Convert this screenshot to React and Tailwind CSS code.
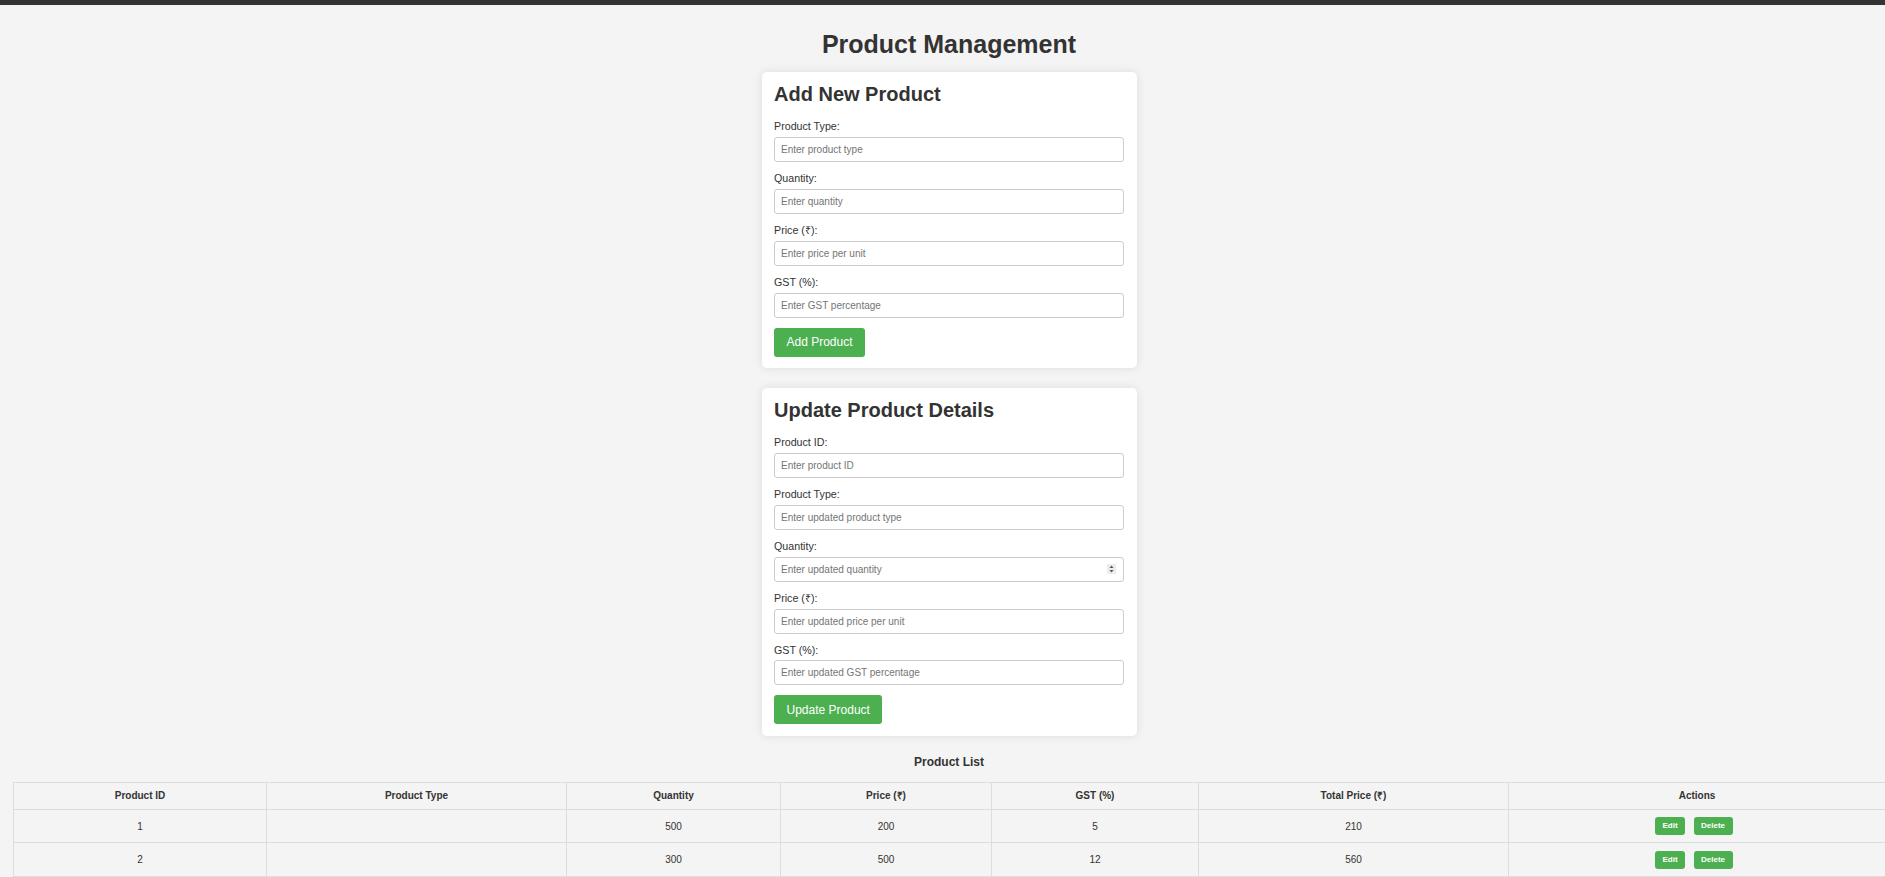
import { useState } from 'react';

const Field = ({ label, placeholder, spinner }) => (
  <div className="mb-[10px]">
    <label className="block text-[10.7px] leading-[12.3px] mb-[4.5px]">{label}</label>
    <div className="relative">
      <input
        type="text"
        placeholder={placeholder}
        className="block w-full h-[25px] px-[6px] text-[10px] bg-white border border-[#ccc] rounded-[3px] outline-none placeholder:text-[#757575]"
      />
      {spinner && (
        <span className="absolute right-[8px] top-1/2 -translate-y-1/2 w-[9px] h-[10px] bg-[#ececec] flex items-center justify-center">
          <svg width="5" height="8" viewBox="0 0 5 8">
            <path d="M2.5 0.5 L4.5 3 L0.5 3 Z" fill="#555" />
            <path d="M2.5 7.5 L4.5 5 L0.5 5 Z" fill="#555" />
          </svg>
        </span>
      )}
    </div>
  </div>
);

const Card = ({ title, fields, button, className = '' }) => (
  <div className={`w-[375px] mx-auto bg-white rounded-[5px] shadow-[0_0_10px_rgba(0,0,0,0.1)] px-[12.5px] pt-[10.5px] pb-[11.5px] ${className}`}>
    <h2 className="text-[20px] font-bold leading-[22.3px] mb-[15.5px]">{title}</h2>
    {fields.map((f) => (
      <Field key={f.label + f.placeholder} {...f} />
    ))}
    <button className="h-[29px] px-[12.5px] text-[12px] text-white bg-[#4CAF50] rounded-[3px]">
      {button}
    </button>
  </div>
);

const products = [
  { id: 1, type: '', qty: 500, price: 200, gst: 5, total: 210 },
  { id: 2, type: '', qty: 300, price: 500, gst: 12, total: 560 },
];

const App = () => {
  const [rows] = useState(products);

  return (
    <div className="min-h-screen bg-[#f4f4f4] text-[#333] font-['Liberation_Sans',Arial,sans-serif] overflow-x-hidden">
      <div className="h-[5px] bg-[#333]" />
      <div className="pl-[13px] pb-[3px]">
        <h1 className="text-center text-[25px] font-bold leading-[28.75px] pt-[25.3px] mb-[13px]">
          Product Management
        </h1>

        <Card
          title="Add New Product"
          button="Add Product"
          fields={[
            { label: 'Product Type:', placeholder: 'Enter product type' },
            { label: 'Quantity:', placeholder: 'Enter quantity' },
            { label: 'Price (₹):', placeholder: 'Enter price per unit' },
            { label: 'GST (%):', placeholder: 'Enter GST percentage' },
          ]}
        />

        <Card
          className="mt-[20px]"
          title="Update Product Details"
          button="Update Product"
          fields={[
            { label: 'Product ID:', placeholder: 'Enter product ID' },
            { label: 'Product Type:', placeholder: 'Enter updated product type' },
            { label: 'Quantity:', placeholder: 'Enter updated quantity', spinner: true },
            { label: 'Price (₹):', placeholder: 'Enter updated price per unit' },
            { label: 'GST (%):', placeholder: 'Enter updated GST percentage' },
          ]}
        />

        <p className="text-center text-[12px] font-bold leading-[14px] mt-[19px] mb-[13px]">Product List</p>

        <table className="w-full table-fixed border-collapse text-[10px] text-center">
          <colgroup>
            <col className="w-[253px]" />
            <col className="w-[300px]" />
            <col className="w-[214px]" />
            <col className="w-[211px]" />
            <col className="w-[207px]" />
            <col className="w-[310px]" />
            <col className="w-[377px]" />
          </colgroup>
          <thead>
            <tr>
              {['Product ID', 'Product Type', 'Quantity', 'Price (₹)', 'GST (%)', 'Total Price (₹)', 'Actions'].map((h) => (
                <th key={h} className="h-[27px] p-0 border border-[#ddd] font-bold">{h}</th>
              ))}
            </tr>
          </thead>
          <tbody>
            {rows.map((r) => (
              <tr key={r.id}>
                <td className="h-[33.5px] p-0 border border-[#ddd]">{r.id}</td>
                <td className="h-[33.5px] p-0 border border-[#ddd]">{r.type}</td>
                <td className="h-[33.5px] p-0 border border-[#ddd]">{r.qty}</td>
                <td className="h-[33.5px] p-0 border border-[#ddd]">{r.price}</td>
                <td className="h-[33.5px] p-0 border border-[#ddd]">{r.gst}</td>
                <td className="h-[33.5px] p-0 border border-[#ddd]">{r.total}</td>
                <td className="h-[33.5px] p-0 border border-[#ddd]">
                  <div className="flex justify-center gap-[3px]">
                    <button className="h-[18px] px-[7px] mr-[6px] text-[8px] font-bold text-white bg-[#4CAF50] rounded-[3px]">Edit</button>
                    <button className="h-[18px] px-[7.5px] mr-[6px] text-[8px] font-bold text-white bg-[#4CAF50] rounded-[3px]">Delete</button>
                  </div>
                </td>
              </tr>
            ))}
          </tbody>
        </table>
      </div>
    </div>
  );
};

export default App;
